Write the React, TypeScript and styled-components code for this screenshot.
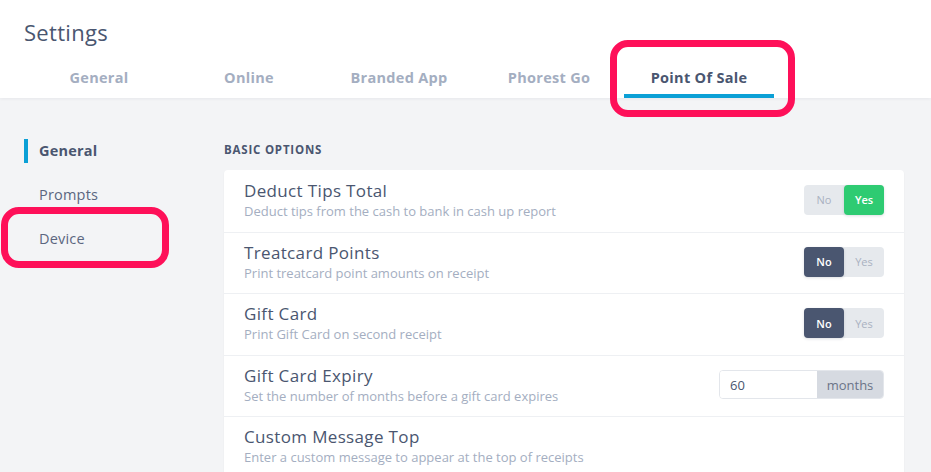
import React from "react"
import styled, { createGlobalStyle, css } from "styled-components"

const GlobalStyle = createGlobalStyle`
	* {
		box-sizing: border-box;
	}
	body {
		margin: 0;
		background: #f3f4f6;
		font-family: "Open Sans", "Liberation Sans", sans-serif;
		color: #4a5670;
	}
`

const Header = styled.header`
	background: #fff;
	padding: 18px 24px 0;
	box-shadow: 0 1px 3px rgba(30, 40, 60, 0.06);
	position: relative;
	z-index: 1;
`

const Title = styled.h1`
	margin: 0;
	font-size: 22px;
	line-height: 28px;
	font-weight: 500;
	letter-spacing: 0.3px;
	color: #4a5670;
`

const Tabs = styled.nav`
	display: flex;
`

const Tab = styled.div<{ $active?: boolean }>`
	position: relative;
	width: 150px;
	padding: 22px 0 6px;
	line-height: 20px;
	font-size: 14.5px;
	font-weight: 700;
	letter-spacing: 0.3px;
	text-align: center;
	color: ${(p) => (p.$active ? "#4a5670" : "#a4aec1")};
	border-bottom: 4px solid ${(p) => (p.$active ? "#0ba0d6" : "transparent")};
`

const Highlight = styled.span<{ $top: number; $right: number; $bottom: number; $left: number }>`
	position: absolute;
	top: ${(p) => p.$top}px;
	right: ${(p) => p.$right}px;
	bottom: ${(p) => p.$bottom}px;
	left: ${(p) => p.$left}px;
	border: 7px solid #fe1059;
	border-radius: 18px;
	pointer-events: none;
	z-index: 5;
`

const Body = styled.div`
	display: flex;
	padding: 41px 27px 0 24px;
`

const Sidebar = styled.aside`
	width: 200px;
	flex-shrink: 0;
	display: flex;
	flex-direction: column;
	gap: 20px;
`

const SideItem = styled.div<{ $active?: boolean }>`
	position: relative;
	height: 24px;
	line-height: 24px;
	font-size: 14.5px;
	letter-spacing: 0.2px;
	padding-left: 11px;
	border-left: 4px solid ${(p) => (p.$active ? "#0ba0d6" : "transparent")};
	color: #5b6680;
	${(p) =>
		p.$active &&
		css`
			font-weight: 700;
			color: #4a5670;
		`}
`

const Main = styled.main`
	flex: 1;
`

const SectionHeading = styled.h2`
	margin: 0 0 9px;
	font-size: 11.5px;
	line-height: 22px;
	font-weight: 700;
	letter-spacing: 0.8px;
	text-transform: uppercase;
	color: #4a5670;
`

const Card = styled.section`
	background: #fff;
	border-radius: 4px;
	box-shadow: 0 1px 2px rgba(30, 40, 60, 0.05);
`

const Row = styled.div`
	display: flex;
	align-items: center;
	justify-content: space-between;
	padding: 9px 20px 11px;
	min-height: 61.5px;
	& + & {
		border-top: 1px solid #eef0f3;
	}
`

const RowText = styled.div`
	display: flex;
	flex-direction: column;
`

const RowTitle = styled.div`
	font-size: 17px;
	line-height: 22px;
	font-weight: 500;
	letter-spacing: 0.35px;
	color: #4a5670;
`

const RowDesc = styled.div`
	font-size: 13px;
	line-height: 18.5px;
	color: #a4aec1;
`

const Toggle = styled.div`
	display: flex;
	width: 80px;
	height: 30px;
	border-radius: 4px;
	background: #e6e9ed;
`

const ToggleOption = styled.div<{ $on?: boolean; $tone?: "green" | "dark" }>`
	width: 40px;
	display: flex;
	align-items: center;
	justify-content: center;
	font-size: 11px;
	border-radius: 4px;
	color: #a9b1c1;
	${(p) =>
		p.$on &&
		css`
			color: #fff;
			font-weight: 600;
			background: ${p.$tone === "green" ? "#2ecb72" : "#4a5670"};
			box-shadow: 0 1px 3px rgba(30, 40, 60, 0.15);
		`}
`

const InputGroup = styled.div`
	display: flex;
	width: 165px;
	height: 29px;
	border: 1px solid #e3e6eb;
	border-radius: 4px;
	overflow: hidden;
`

const NumberInput = styled.input`
	width: 97px;
	border: none;
	outline: none;
	padding: 0 10px;
	font-family: inherit;
	font-size: 13px;
	color: #4a5670;
`

const Addon = styled.div`
	flex: 1;
	display: flex;
	align-items: center;
	justify-content: center;
	background: #d6dae1;
	font-size: 13px;
	color: #6b7488;
`

type Option = {
	title: string
	desc: string
	control?: "yes" | "no" | "months"
}

const options: Option[] = [
	{ title: "Deduct Tips Total", desc: "Deduct tips from the cash to bank in cash up report", control: "yes" },
	{ title: "Treatcard Points", desc: "Print treatcard point amounts on receipt", control: "no" },
	{ title: "Gift Card", desc: "Print Gift Card on second receipt", control: "no" },
	{ title: "Gift Card Expiry", desc: "Set the number of months before a gift card expires", control: "months" },
	{ title: "Custom Message Top", desc: "Enter a custom message to appear at the top of receipts" },
]

function Control({ kind }: { kind?: Option["control"] }) {
	if (kind === "months") {
		return (
			<InputGroup>
				<NumberInput defaultValue="60" />
				<Addon>months</Addon>
			</InputGroup>
		)
	}
	if (!kind) return null
	return (
		<Toggle>
			<ToggleOption $on={kind === "no"} $tone="dark">
				No
			</ToggleOption>
			<ToggleOption $on={kind === "yes"} $tone="green">
				Yes
			</ToggleOption>
		</Toggle>
	)
}

const tabs = ["General", "Online", "Branded App", "Phorest Go", "Point Of Sale"]

export default function App() {
	return (
		<>
			<GlobalStyle />
			<Header>
				<Title>Settings</Title>
				<Tabs>
					{tabs.map((t) => (
						<Tab key={t} $active={t === "Point Of Sale"}>
							{t}
							{t === "Point Of Sale" && <Highlight $top={-6} $right={-21} $bottom={-23} $left={-14} />}
						</Tab>
					))}
				</Tabs>
			</Header>
			<Body>
				<Sidebar>
					<SideItem $active>General</SideItem>
					<SideItem>Prompts</SideItem>
					<SideItem>
						Device
						<Highlight $top={-20} $right={55} $bottom={-17} $left={-27} />
					</SideItem>
				</Sidebar>
				<Main>
					<SectionHeading>Basic Options</SectionHeading>
					<Card>
						{options.map((o) => (
							<Row key={o.title}>
								<RowText>
									<RowTitle>{o.title}</RowTitle>
									<RowDesc>{o.desc}</RowDesc>
								</RowText>
								<Control kind={o.control} />
							</Row>
						))}
					</Card>
				</Main>
			</Body>
		</>
	)
}
